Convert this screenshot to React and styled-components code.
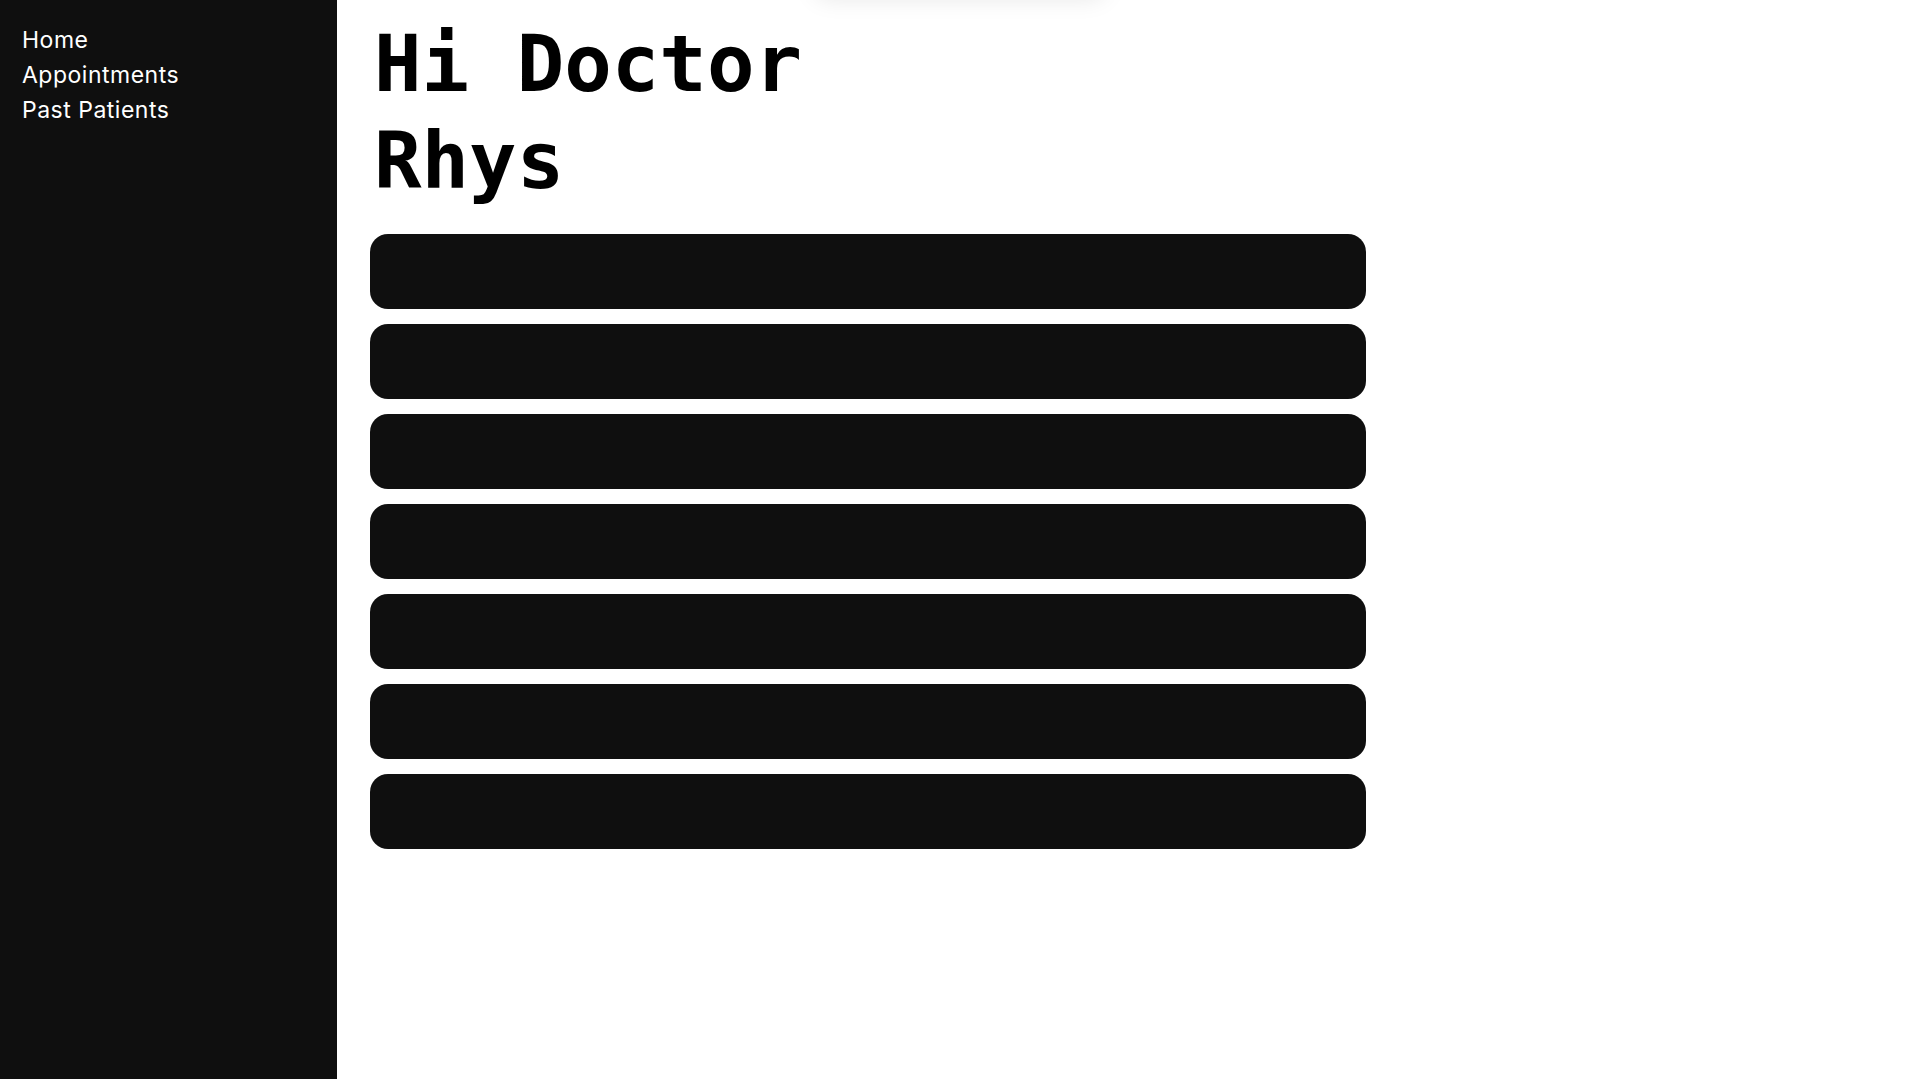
import styled, { createGlobalStyle } from "styled-components"

const GlobalStyle = createGlobalStyle`
    body {
        margin: 0;
        background: #ffffff;
        font-family: "Inter", "Liberation Sans", sans-serif;
    }
`

const appointments = [1, 2, 3, 4, 5, 6, 7]

export default function App() {
    return (
        <>
            <GlobalStyle />
            <Page>
                <Sidebar>
                    <NavLink href="#">Home</NavLink>
                    <NavLink href="#">Appointments</NavLink>
                    <NavLink href="#">Past Patients</NavLink>
                </Sidebar>
                <Main>
                    <Greeting>Hi Doctor<br />Rhys</Greeting>
                    <List>
                        {appointments.map(id =>
                            <Appointment key={id} />
                        )}
                    </List>
                </Main>
            </Page>
            <Toast />
        </>
    )
}

const Page = styled.div`
    display: flex;
    min-height: 1079px;
`

const Sidebar = styled.nav`
    width: 337px;
    flex-shrink: 0;
    background: #0f0f0f;
    display: flex;
    flex-direction: column;
    padding: 23px 0 0 22px;
    box-sizing: border-box;
`

const NavLink = styled.a`
    color: #ffffff;
    text-decoration: none;
    font-family: "Inter", "Liberation Sans", sans-serif;
    font-size: 23px;
    line-height: 35px;
    letter-spacing: 0.5px;
`

const Main = styled.main`
    flex: 1;
    padding: 16px 0 0 33px;
`

const Greeting = styled.h1`
    margin: 0;
    padding-left: 4px;
    font-family: "DejaVu Sans Mono", "Liberation Mono", monospace;
    font-weight: bold;
    font-size: 79px;
    line-height: 97px;
    color: #000000;
`

const List = styled.ul`
    list-style: none;
    margin: 24px 0 0 0;
    padding: 0;
    width: 996px;
    display: flex;
    flex-direction: column;
    gap: 15px;
`

const Appointment = styled.li`
    height: 75px;
    background: #0f0f0f;
    border-radius: 18px;
`

const Toast = styled.div`
    position: fixed;
    top: -60px;
    left: 50%;
    transform: translateX(-50%);
    width: 290px;
    height: 56px;
    background: #ffffff;
    border-radius: 12px;
    box-shadow: 0 2px 24px rgba(0, 0, 0, 0.1);
`
